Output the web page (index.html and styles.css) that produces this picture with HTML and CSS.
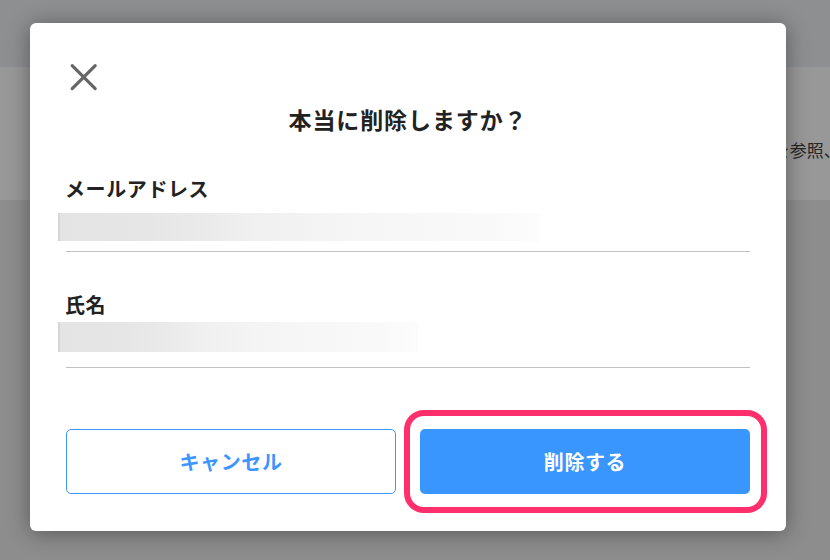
FILE: index.html
```html
<!DOCTYPE html>
<html lang="ja">
<head>
<meta charset="utf-8">
<title>削除確認</title>
<link rel="stylesheet" href="styles.css">
</head>
<body>
<div class="page">
  <header class="page-header"></header>
  <section class="page-band">
    <p class="band-text">詳細はヘルプページを参照、</p>
  </section>
  <main class="page-body"></main>
</div>

<div class="dialog" role="dialog" aria-modal="true">
  <button class="close" aria-label="閉じる">
    <svg width="32" height="32" viewBox="0 0 32 32" aria-hidden="true">
      <path d="M4.2 3.6 L27.2 26.6 M27.2 3.6 L4.2 26.6" stroke="#666" stroke-width="3.2" stroke-linecap="round" fill="none"/>
    </svg>
  </button>
  <h2 class="title">本当に削除しますか？</h2>

  <div class="field">
    <div class="field-label">メールアドレス</div>
    <div class="field-value">
      <div class="mosaic mosaic-email"></div>
    </div>
  </div>

  <div class="field">
    <div class="field-label">氏名</div>
    <div class="field-value">
      <div class="mosaic mosaic-name"></div>
    </div>
  </div>

  <div class="actions">
    <button class="btn btn-cancel">キャンセル</button>
    <div class="btn-wrap">
      <button class="btn btn-delete">削除する</button>
      <span class="highlight"></span>
    </div>
  </div>
</div>
</body>
</html>
```

FILE: styles.css
```css
* { box-sizing: border-box; }

html, body {
  margin: 0;
  padding: 0;
}

body {
  width: 830px;
  height: 560px;
  overflow: hidden;
  background: #8d8d8d;
  font-family: "Noto Sans CJK JP", "Noto Sans", sans-serif;
  position: relative;
}

.page {
  display: flex;
  flex-direction: column;
  height: 560px;
}

.page-header {
  height: 67px;
  background: #8e8f91;
}

.page-band {
  height: 133px;
  background: #989898;
  padding-top: 70px;
  overflow: hidden;
}

.band-text {
  margin: 0;
  padding-left: 620px;
  white-space: nowrap;
  font-size: 17px;
  line-height: 25px;
  color: #262626;
}

.page-body {
  flex: 1;
  background: #8d8d8d;
}

.dialog {
  position: absolute;
  left: 30px;
  top: 23px;
  width: 756px;
  height: 508px;
  background: #fff;
  border-radius: 6px;
  box-shadow: 0 2px 22px rgba(0, 0, 0, 0.38);
  padding: 39px 36px 37px 36px;
  display: flex;
  flex-direction: column;
}

.close {
  display: block;
  width: 32px;
  height: 32px;
  padding: 0;
  margin: 0 0 0 2px;
  border: 0;
  background: none;
}

.close svg { display: block; }

.title {
  margin: 9px 0 0;
  text-align: center;
  font-size: 23px;
  line-height: 32px;
  font-weight: 700;
  color: #222;
  letter-spacing: 0.9px;
}

.field { margin-top: 40px; }
.field + .field { margin-top: 39px; }

.field-label {
  font-size: 20px;
  line-height: 28px;
  font-weight: 700;
  color: #222;
  letter-spacing: 0.6px;
  margin-left: -1px;
}

.field-value {
  height: 49px;
  border-bottom: 1px solid #c2c2c2;
  padding-top: 10px;
}

.field + .field .field-value {
  padding-top: 3px;
}

.mosaic {
  margin-left: -8px;
  border-left: 2px solid #d6d6d6;
  background: linear-gradient(90deg,
    #e4e4e4 0%, #e6e6e6 18%, #eaeaea 30%, #f0f0f0 40%,
    #f4f4f4 55%, #f7f7f7 70%, #f9f9f9 88%, #fcfcfc 100%);
}

.mosaic-email { width: 482px; height: 28px; }
.mosaic-name  { width: 360px; height: 30px; }

.actions {
  margin-top: auto;
  display: grid;
  grid-template-columns: 1fr 1fr;
  gap: 24px;
}

.btn {
  width: 100%;
  height: 65px;
  padding: 0;
  border-radius: 5px;
  font-family: inherit;
  font-size: 20px;
  font-weight: 700;
  letter-spacing: 0.6px;
  cursor: pointer;
}

.btn-cancel {
  background: #fff;
  border: 1px solid #3d96ff;
  color: #3d96ff;
}

.btn-wrap {
  display: flex;
  position: relative;
}

.btn-delete {
  background: #3a96ff;
  border: 0;
  color: #fff;
}

.highlight {
  position: absolute;
  left: -16px;
  right: -17px;
  top: -19px;
  bottom: -19px;
  border: 6.5px solid #ff2e6c;
  border-radius: 20px;
  pointer-events: none;
}
```
